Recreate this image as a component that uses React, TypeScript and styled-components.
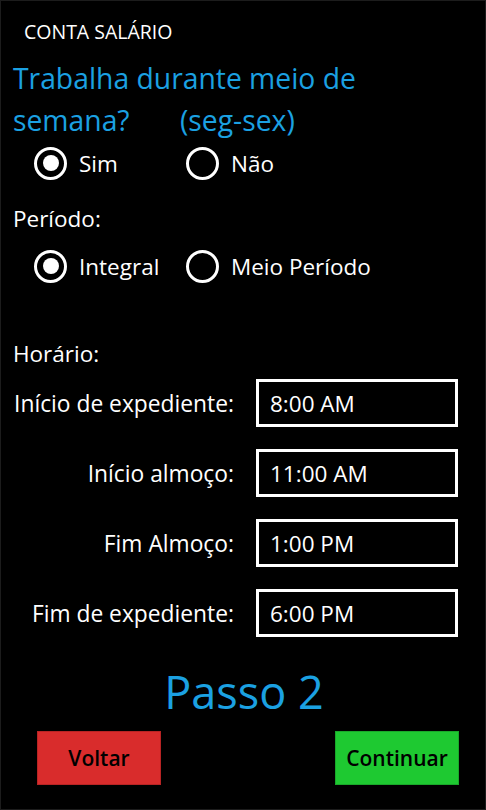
import { Fragment } from 'react';
import styled, { createGlobalStyle } from 'styled-components';

const GlobalStyle = createGlobalStyle`
  html, body {
    margin: 0;
    padding: 0;
    background: #000;
  }
  body {
    font-family: 'Open Sans', 'Noto Sans', sans-serif;
    color: #fff;
  }
`;

const accent = '#1ba1e2';

const Screen = styled.div`
  width: 486px;
  height: 810px;
  box-sizing: border-box;
  border: 1px solid #1c1c1c;
  background: #000;
  display: flex;
  flex-direction: column;
  overflow: hidden;
`;

const AppTitle = styled.div`
  margin: 20px 0 0 23px;
  font-size: 19.5px;
  line-height: 22px;
`;

const Question = styled.h1`
  margin: 14px 0 0 12px;
  font-size: 28.3px;
  line-height: 42px;
  font-weight: 400;
  color: ${accent};
`;

const QuestionLine = styled.div`
  display: flex;
`;

const QuestionPart = styled.span<{ $width?: number }>`
  width: ${(p) => (p.$width ? `${p.$width}px` : 'auto')};
`;

const RadioRow = styled.div<{ $top: number }>`
  display: flex;
  margin: ${(p) => p.$top}px 0 0 33px;
`;

const RadioOption = styled.label<{ $width: number }>`
  display: flex;
  align-items: center;
  gap: 12px;
  width: ${(p) => p.$width}px;
  font-size: 22.5px;
  height: 34px;
`;

const RadioCircle = styled.span<{ $checked: boolean }>`
  width: 33px;
  height: 33px;
  box-sizing: border-box;
  border: 3px solid #fff;
  border-radius: 50%;
  display: flex;
  align-items: center;
  justify-content: center;
  flex-shrink: 0;

  &::after {
    content: '';
    width: 16px;
    height: 16px;
    border-radius: 50%;
    background: #fff;
    display: ${(p) => (p.$checked ? 'block' : 'none')};
  }
`;

const SectionLabel = styled.div<{ $top: number }>`
  margin: ${(p) => p.$top}px 0 0 12px;
  font-size: 22.5px;
  line-height: 28px;
`;

const TimeGrid = styled.div`
  display: grid;
  grid-template-columns: 233px 202px;
  column-gap: 22px;
  row-gap: 22px;
  margin: 11px 0 0 0;
  align-items: center;
`;

const TimeLabel = styled.div`
  text-align: right;
  font-size: 22.8px;
  white-space: nowrap;
`;

const TimeBox = styled.div`
  height: 48px;
  box-sizing: border-box;
  border: 3px solid #fff;
  display: flex;
  align-items: center;
  padding-left: 11px;
  font-size: 22.5px;
`;

const Step = styled.div`
  margin-top: 27px;
  text-align: center;
  font-size: 45px;
  line-height: 56px;
  color: ${accent};
  padding-left: 2px;
`;

const Actions = styled.div`
  display: flex;
  justify-content: space-between;
  margin: 11px 26px 0 36px;
`;

const ActionButton = styled.button<{ $bg: string; $edge: string }>`
  width: 124px;
  height: 54px;
  border: 1px solid ${(p) => p.$edge};
  background: ${(p) => p.$bg};
  color: #000;
  font-family: inherit;
  font-size: 21px;
  font-weight: 600;
  padding: 0;
  cursor: pointer;
`;

const times = [
  { label: 'Início de expediente:', value: '8:00 AM' },
  { label: 'Início almoço:', value: '11:00 AM' },
  { label: 'Fim Almoço:', value: '1:00 PM' },
  { label: 'Fim de expediente:', value: '6:00 PM' },
];

export default function App() {
  return (
    <>
      <GlobalStyle />
      <Screen>
        <AppTitle>CONTA SALÁRIO</AppTitle>
        <Question>
          <QuestionLine>Trabalha durante meio de</QuestionLine>
          <QuestionLine>
            <QuestionPart $width={167}>semana?</QuestionPart>
            <QuestionPart>(seg-sex)</QuestionPart>
          </QuestionLine>
        </Question>

        <RadioRow $top={5}>
          <RadioOption $width={152}>
            <RadioCircle $checked />
            Sim
          </RadioOption>
          <RadioOption $width={200}>
            <RadioCircle $checked={false} />
            Não
          </RadioOption>
        </RadioRow>

        <SectionLabel $top={25}>Período:</SectionLabel>

        <RadioRow $top={16}>
          <RadioOption $width={152}>
            <RadioCircle $checked />
            Integral
          </RadioOption>
          <RadioOption $width={220}>
            <RadioCircle $checked={false} />
            Meio Período
          </RadioOption>
        </RadioRow>

        <SectionLabel $top={57}>Horário:</SectionLabel>

        <TimeGrid>
          {times.map((t) => (
            <Fragment key={t.label}>
              <TimeLabel>{t.label}</TimeLabel>
              <TimeBox>{t.value}</TimeBox>
            </Fragment>
          ))}
        </TimeGrid>

        <Step>Passo 2</Step>

        <Actions>
          <ActionButton type="button" $bg="#d92c2c" $edge="#b82424">
            Voltar
          </ActionButton>
          <ActionButton type="button" $bg="#1ec931" $edge="#19a82a">
            Continuar
          </ActionButton>
        </Actions>
      </Screen>
    </>
  );
}
